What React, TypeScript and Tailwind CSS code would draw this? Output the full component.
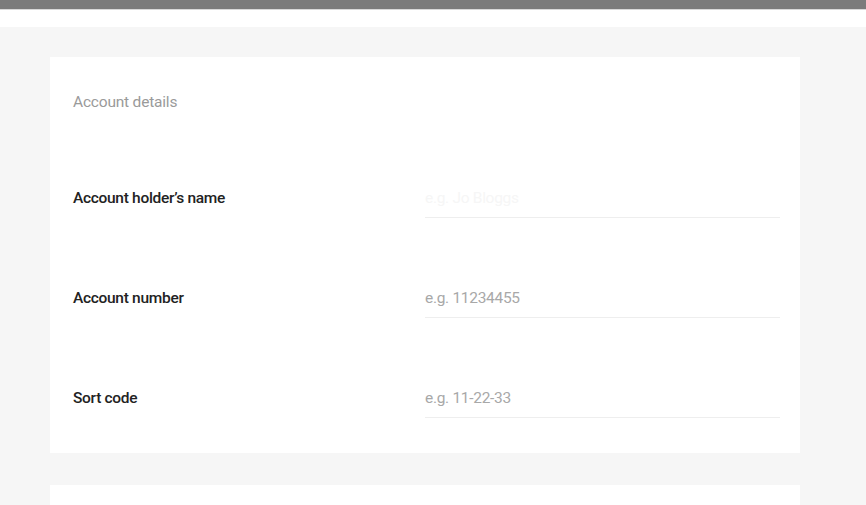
export default function App() {
  const rows = [
    { label: "Account holder’s name", placeholder: '', faint: true },
    { label: 'Account number', placeholder: 'e.g. 11234455' },
    { label: 'Sort code', placeholder: 'e.g. 11-22-33' },
  ]

  return (
    <div className="h-[505px] overflow-hidden bg-[#f6f6f6] font-['Roboto',sans-serif]">
      <div className="h-[9px] bg-[#7b7b7b]" />
      <div className="h-[18px] bg-white border-t border-[#d8d8d8]" />
      <div className="pt-[30px] pl-[50px]">
        <div className="w-[750px] bg-white pt-[35px] pb-[35px] pl-[23px] pr-[20px]">
          <div className="text-[15.5px] leading-[20px] text-[#9a9a9a] tracking-[-0.2px]">Account details</div>
          <div className="mt-[76px] flex flex-col gap-[70px]">
            {rows.map((row) => (
              <div key={row.label} className="flex items-start">
                <div className="w-[352px] text-[15.5px] leading-[20px] font-medium text-[#222] tracking-[-0.3px]">
                  {row.label}
                </div>
                <div className="flex-1 border-b border-[#eeeeee] pb-[9px] text-[15.5px] leading-[20px] text-[#a8a8a8] tracking-[-0.3px]">
                  {row.faint ? <span className="text-[#f6f6f6]">e.g. Jo Bloggs</span> : row.placeholder}
                </div>
              </div>
            ))}
          </div>
        </div>
        <div className="w-[750px] bg-white h-[60px] mt-[32px]" />
      </div>
    </div>
  )
}
